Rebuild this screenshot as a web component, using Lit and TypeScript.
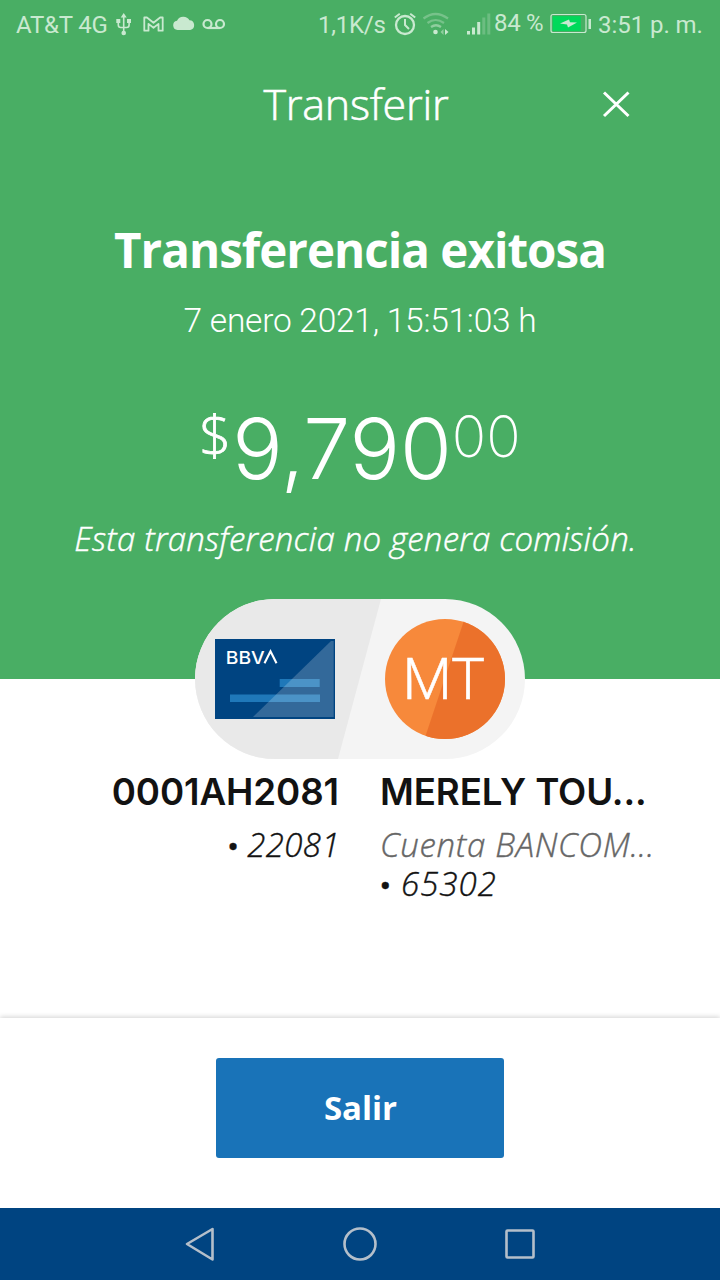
import { LitElement, html, css } from "lit";
import { customElement, property } from "lit/decorators.js";

@customElement("status-bar")
export class StatusBar extends LitElement {
  static styles = css`
    :host { display: flex; justify-content: space-between; height: 48px; box-sizing: border-box; padding: 0 17px 0 16px; color: #c9e9d0; font: 400 24px/51px Roboto, sans-serif; white-space: pre; }
    .side { display: flex; align-items: flex-start; }
    svg { display: block; height: 48px; }
    .carrier { letter-spacing: -0.2px; width: 98px; }
    .rate { letter-spacing: -0.25px; width: 75px; }
    .pct { letter-spacing: -0.3px; line-height: 47px; width: 55px; }
    .time { letter-spacing: -0.05px; width: 105px; }
  `;
  render() {
    return html`
      <div class="side">
        <span class="carrier">AT&amp;T 4G</span>
        <svg width="112" height="48" viewBox="114 0 112 48" fill="none" stroke="#c9e9d0" stroke-width="1.6">
          <path d="M123.700 16v18M118.300 21v4q0 2.500 2.500 2.500h5.800q2.500 0 2.500-2.500v-4" />
          <path fill="#c9e9d0" stroke="none" d="M123.700 13l3 4.500h-6zM116.300 19h4v4h-4zM127 19h4v4h-4z" />
          <circle cx="123.700" cy="33" r="2.300" fill="#c9e9d0" stroke="none" />
          <path stroke-width="1.8" stroke-linejoin="round" d="M144.300 17.500h2.600l6.600 5.200 6.600-5.200h2.600v13.200h-4.200v-6.800l-5 3.900-5-3.900v6.800h-4.200z" />
          <path fill="#c9e9d0" stroke="none" d="M177.500 30a4.700 4.700 0 0 1-.5-9.300 7 7 0 0 1 12.500-.4 4.900 4.900 0 0 1 .7 9.700z" />
          <g stroke-width="2.200"><circle cx="207.500" cy="24" r="4" /><circle cx="220" cy="24" r="4" /><path d="M207.500 28h12.500" /></g>
        </svg>
      </div>
      <div class="side">
        <span class="rate">1,1K/s</span>
        <svg width="101" height="48" viewBox="393 0 101 48" fill="none" stroke="#c9e9d0" stroke-width="2.300">
          <circle cx="405" cy="25" r="9" /><path stroke-width="2" d="M405 19v6l4 4M394.800 17.500l5-3.800M415.200 17.500l-5-3.800" />
          <g stroke="#77c28a" stroke-width="2.200"><path d="M423.500 18.500q12-9 24.500 0M427.500 23q8-6 16.500 0" /></g>
          <path d="M431 27q5-3.500 10 0" stroke="#8fce9e" />
          <circle cx="435.500" cy="32" r="2.300" fill="#c9e9d0" stroke="none" />
          <path fill="#8fce9e" stroke="none" d="M443.500 29v6l-3-3z" /><path fill="#c9e9d0" stroke="none" d="M445 29v6l3.500-3z" />
          <path stroke-width="3" d="M468.500 31v3.500M473.500 27.500v7M478.700 22v12.500" />
          <path stroke-width="3" stroke="#6cbd81" d="M483.800 17.500v17M488.800 13.500v21" />
        </svg>
        <span class="pct">84 %</span>
        <svg width="49" height="48" viewBox="549 0 49 48">
          <rect x="551" y="14.500" width="35" height="18" rx="2" fill="none" stroke="#c9e9d0" stroke-width="1.200" />
          <rect x="552.700" y="16.200" width="28" height="14.600" fill="#00d95a" />
          <rect x="588.500" y="19" width="2.500" height="10" fill="#c9e9d0" />
          <path fill="#c9e9d0" d="M560 23.500l9-4 1 2.800 7 .2-9 5-1-3z" />
        </svg>
        <span class="time">3:51 p. m.</span>
      </div>`;
  }
}

@customElement("account-pair")
export class AccountPair extends LitElement {
  @property() initials = "";
  static styles = css`
    :host { display: block; width: 330px; height: 160px; }
    svg { display: block; }
    .brand { font: 500 17.5px Inter, sans-serif; }
    .initials { font: 300 57px Roboto, sans-serif; stroke: #fff; stroke-width: 0.5px; }
  `;
  render() {
    return html`<svg width="330" height="160" viewBox="0 0 330 160" role="img" aria-label="BBVA">
      <defs><clipPath id="pill"><rect width="330" height="160" rx="80" /></clipPath><clipPath id="disc"><circle cx="250" cy="80" r="60" /></clipPath></defs>
      <g clip-path="url(#pill)"><path fill="#f4f4f4" d="M0 0h330v160H0z" /><path fill="#e9e9e9" d="M0 0h186l-43 160H0z" /></g>
      <g transform="translate(20 40)">
        <path fill="#004481" d="M0 0h120v80H0z" />
        <path fill="#1f78b9" d="M64.700 40h40v8h-40zM15 55.500h90v7.500H15z" />
        <path fill="#fff" fill-opacity=".2" d="M116 2h2.700v76H38z" />
        <text class="brand" x="10.800" y="24.700" fill="#fff" textLength="39" lengthAdjust="spacingAndGlyphs">BBV</text>
        <path fill="none" stroke="#fff" stroke-width="2.100" d="M49.500 24.300l6-12 6 12" />
      </g>
      <g clip-path="url(#disc)"><path fill="#f7893b" d="M190 20h120v120H190z" /><path fill="#eb712b" d="M269.500 20H310v120h-80.500z" /></g>
      <text class="initials" x="207.500" y="100" fill="#fff">${this.initials}</text>
    </svg>`;
  }
}

@customElement("app-root")
export class AppRoot extends LitElement {
  static styles = css`
    :host { display: flex; flex-direction: column; height: 1280px; background: #fff; font-family: "Open Sans", sans-serif; white-space: nowrap; overflow: hidden; }
    .hero { background: #49ae64; color: #fff; height: 679px; display: flex; flex-direction: column; flex: none; }
    .head { display: grid; grid-template-columns: 90px 1fr 90px; height: 112px; align-items: center; }
    .head h1 { grid-column: 2; margin: 0; padding-right: 8px; text-align: center; font-weight: 300; font-size: 43px; line-height: 60px; letter-spacing: -0.2px; -webkit-text-stroke: 0.6px; }
    .close { display: block; }
    .title { margin: 60px 0 0; text-align: center; font-size: 47.5px; line-height: 60px; font-weight: 700; letter-spacing: -0.97px; }
    .date { margin-top: 21px; text-align: center; font: 300 33.5px/40px Roboto, sans-serif; letter-spacing: -0.25px; }
    .amount { display: flex; justify-content: center; margin-top: 48px; height: 120px; font-family: Inter, sans-serif; font-weight: 300; }
    .whole { font-size: 84px; line-height: 120px; }
    .small { font-size: 57px; line-height: 95px; font-weight: 250; }
    .sign { font: 300 56px/88px "Open Sans", sans-serif; -webkit-text-stroke: 0.8px; margin-right: 1px; }
    .fee { margin: 10px 0 0; padding-right: 9px; text-align: center; font-size: 33px; line-height: 40px; font-style: italic; font-weight: 300; letter-spacing: 0.22px; -webkit-text-stroke: 0.45px; }
    .pair { align-self: center; margin-top: auto; margin-bottom: -80px; }
    .accounts { flex: 1; display: grid; grid-template-columns: 340px 1fr; column-gap: 40px; padding-top: 89px; color: #121212; }
    .from { text-align: right; }
    .name { font: 600 36.700px/48px Inter, sans-serif; letter-spacing: -0.1px; }
    .from .name { padding-right: 1px; }
    .line { font-size: 33px; line-height: 39px; font-style: italic; font-weight: 300; letter-spacing: 1px; -webkit-text-stroke: 0.4px; }
    .line b { font: 700 29px/30px Roboto, sans-serif; letter-spacing: 1px; }
    .from .line { letter-spacing: 0.4px; }
    .from b { letter-spacing: 0; }
    .line.first { margin-top: 9px; }
    .line.bank { letter-spacing: 0.7px; color: #666; }
    footer { height: 190px; box-sizing: border-box; padding-top: 40px; display: flex; justify-content: center; align-items: flex-start; box-shadow: 0 -1px 5px rgba(0, 0, 0, .18); }
    button { width: 288px; height: 100px; border: 0; border-radius: 3px; padding: 0 0 2px 1px; background: #1973b8; color: #fff; font: 700 33px "Open Sans", sans-serif; }
    nav { height: 72px; background: #004481; flex: none; }
    nav svg { display: block; }
  `;
  render() {
    return html`
      <section class="hero">
        <status-bar></status-bar>
        <div class="head">
          <h1>Transferir</h1>
          <svg class="close" width="90" height="60" viewBox="630 74 90 60" overflow="visible"><path fill="none" stroke="#fff" stroke-width="3" d="M604 92.500l24.500 23.500M628.500 92.500L604 116" /></svg>
        </div>
        <h2 class="title">Transferencia exitosa</h2>
        <div class="date">7 enero 2021, 15:51:03 h</div>
        <div class="amount"><span class="sign">$</span><span class="whole">9,790</span><span class="small">00</span></div>
        <p class="fee">Esta transferencia no genera comisión.</p>
        <account-pair class="pair" initials="MT"></account-pair>
      </section>
      <section class="accounts">
        <div class="from"><div class="name">0001AH2081</div><div class="line first"><b>•</b> 22081</div></div>
        <div><div class="name">MERELY TOU...</div><div class="line first bank">Cuenta BANCOM...</div><div class="line"><b>•</b> 65302</div></div>
      </section>
      <footer><button>Salir</button></footer>
      <nav><svg width="720" height="72" viewBox="0 0 720 72" fill="none" stroke="#b4bfca" stroke-width="2.600" stroke-linejoin="round">
        <path d="M187 36l25.500-15v30.500z" /><circle cx="360" cy="36" r="15.500" /><rect x="506.500" y="22.500" width="27" height="27" rx="1" />
      </svg></nav>`;
  }
}
